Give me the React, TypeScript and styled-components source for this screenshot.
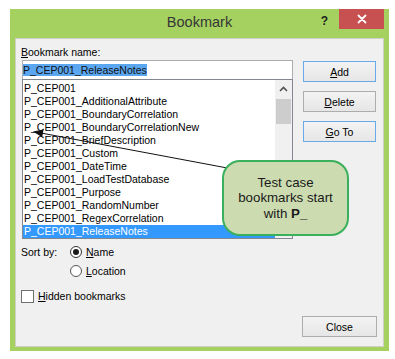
import React from "react";
import styled, { createGlobalStyle } from "styled-components";

const GlobalStyle = createGlobalStyle`
  html, body { margin: 0; padding: 0; background: #ffffff; }
  body { font-family: "Liberation Sans", Arial, sans-serif; color: #000; }
  * { box-sizing: border-box; }
`;

const Page = styled.div`
  padding: 9px 0 0 10px;
`;

const Frame = styled.div`
  position: relative;
  width: 379px;
  height: 342px;
  background: #a4d160;
  padding: 0 5px 4px 5px;
  display: flex;
  flex-direction: column;
`;

const TitleBar = styled.div`
  height: 29px;
  display: grid;
  grid-template-columns: 1fr auto 1fr;
  align-items: start;
`;

const Title = styled.div`
  grid-column: 2;
  font-size: 14.5px;
  line-height: 27px;
  color: #363636;
`;

const Controls = styled.div`
  grid-column: 3;
  justify-self: end;
  display: flex;
  align-items: flex-start;
`;

const Help = styled.div`
  font-size: 12px;
  font-weight: bold;
  line-height: 14px;
  margin-top: 5px;
  margin-right: 11px;
  color: #222;
`;

const CloseX = styled.div`
  width: 45px;
  height: 20px;
  background: #c75050;
  display: flex;
  align-items: center;
  justify-content: center;
`;

const Panel = styled.div`
  flex: 1;
  background: #f0f0f0;
  border: 1px solid #cfcfc4;
  padding: 6px 7px 0 6px;
  display: flex;
  flex-direction: column;
  font-size: 10.5px;
`;

const Body = styled.div`
  display: grid;
  grid-template-columns: 271px 73px;
  column-gap: 10px;
`;

const LeftCol = styled.div`
  display: flex;
  flex-direction: column;
`;

const FieldLabel = styled.div`
  height: 14px;
  line-height: 14px;
  margin-left: -1px;
  margin-bottom: 1px;
`;

const U = styled.span`
  text-decoration: underline;
`;

const NameInput = styled.div`
  height: 19px;
  border: 1px solid #abadb3;
  border-bottom: none;
  background: #fff;
  display: flex;
  align-items: center;
`;

const Selection = styled.span`
  background: #5ba6f0;
  color: #111;
  line-height: 12px;
`;

const ListBox = styled.div`
  height: 160px;
  border: 1px solid #828790;
  background: #fff;
  display: flex;
`;

const Items = styled.div`
  flex: 1;
  padding-top: 2px;
  overflow: hidden;
`;

const Item = styled.div<{ $selected?: boolean }>`
  height: 13px;
  line-height: 13px;
  padding-left: 1px;
  white-space: nowrap;
  background: ${(p) => (p.$selected ? "#3399ff" : "transparent")};
  color: ${(p) => (p.$selected ? "#fff" : "#000")};
`;

const ScrollBar = styled.div`
  width: 17px;
  background: #f0f0f0;
  display: flex;
  flex-direction: column;
`;

const ScrollArrow = styled.div`
  height: 17px;
  display: flex;
  align-items: center;
  justify-content: center;
`;

const ScrollThumb = styled.div`
  height: 25px;
  margin: 2px 1px 0 1px;
  background: #cdcdcd;
`;

const SortSection = styled.div`
  margin-top: 3px;
  display: grid;
  grid-template-columns: 48px auto;
  grid-auto-rows: 19px;
  align-items: center;
`;

const SortLabel = styled.div`
  grid-column: 1;
  grid-row: 1;
  margin-left: -1px;
`;

const RadioOption = styled.div`
  grid-column: 2;
  display: flex;
  align-items: center;
  gap: 4px;
`;

const RadioCircle = styled.div<{ $checked?: boolean }>`
  width: 12px;
  height: 12px;
  border-radius: 50%;
  border: 1px solid ${(p) => (p.$checked ? "#333" : "#555")};
  background: #fff;
  display: flex;
  align-items: center;
  justify-content: center;
  &::after {
    content: "";
    width: 6px;
    height: 6px;
    border-radius: 50%;
    background: ${(p) => (p.$checked ? "#1a1a1a" : "transparent")};
  }
`;

const CheckRow = styled.div`
  margin-top: 7px;
  height: 18px;
  display: flex;
  align-items: center;
  gap: 4px;
  margin-left: -1px;
`;

const CheckBox = styled.div`
  width: 13px;
  height: 13px;
  border: 1px solid #707070;
  background: #fff;
`;

const RightCol = styled.div`
  padding-top: 16px;
  display: flex;
  flex-direction: column;
  gap: 9px;
`;

const DialogButton = styled.div<{ $primary?: boolean }>`
  height: 21px;
  width: 73px;
  border: 1px solid ${(p) => (p.$primary ? "#6aa9e9" : "#adadad")};
  background: linear-gradient(#f3f3f3, #e6e6e6);
  display: flex;
  align-items: center;
  justify-content: center;
  font-size: 10.5px;
  color: #000;
`;

const Footer = styled.div`
  margin-top: 11px;
  display: flex;
  justify-content: flex-end;
  margin-right: -1px;
`;

const CloseButton = styled(DialogButton)`
  width: 75px;
`;

const ArrowLayer = styled.svg`
  position: absolute;
  left: 0;
  top: 0;
  pointer-events: none;
  z-index: 1;
`;

const Callout = styled.div`
  position: absolute;
  left: 212px;
  top: 151px;
  width: 127px;
  height: 76px;
  border: 2px solid #3aaf5c;
  border-radius: 18px;
  background: #cddcb0;
  display: flex;
  align-items: center;
  justify-content: center;
  text-align: center;
  font-family: "Liberation Sans", Arial, sans-serif;
  font-size: 13.3px;
  line-height: 15.5px;
  color: #1a1a1a;
  z-index: 2;
`;

const items = [
  "P_CEP001",
  "P_CEP001_AdditionalAttribute",
  "P_CEP001_BoundaryCorrelation",
  "P_CEP001_BoundaryCorrelationNew",
  "P_CEP001_BriefDescription",
  "P_CEP001_Custom",
  "P_CEP001_DateTime",
  "P_CEP001_LoadTestDatabase",
  "P_CEP001_Purpose",
  "P_CEP001_RandomNumber",
  "P_CEP001_RegexCorrelation",
  "P_CEP001_ReleaseNotes",
];

export default function App() {
  return (
    <>
      <GlobalStyle />
      <Page>
        <Frame>
          <TitleBar>
            <Title>Bookmark</Title>
            <Controls>
              <Help>?</Help>
              <CloseX>
                <svg width="10" height="10" viewBox="0 0 10 10">
                  <path d="M1.5 1.5 L8.5 8.5 M8.5 1.5 L1.5 8.5" stroke="#fff" strokeWidth="1.8" strokeLinecap="round" />
                </svg>
              </CloseX>
            </Controls>
          </TitleBar>
          <Panel>
            <Body>
              <LeftCol>
                <FieldLabel>
                  <U>B</U>ookmark name:
                </FieldLabel>
                <NameInput>
                  <Selection>P_CEP001_ReleaseNotes</Selection>
                </NameInput>
                <ListBox>
                  <Items>
                    {items.map((it, i) => (
                      <Item key={it} $selected={i === items.length - 1}>
                        {it}
                      </Item>
                    ))}
                  </Items>
                  <ScrollBar>
                    <ScrollArrow>
                      <svg width="9" height="6" viewBox="0 0 9 6">
                        <path d="M1 5 L4.5 1.5 L8 5" stroke="#505050" strokeWidth="1.6" fill="none" />
                      </svg>
                    </ScrollArrow>
                    <ScrollThumb />
                  </ScrollBar>
                </ListBox>
                <SortSection>
                  <SortLabel>Sort by:</SortLabel>
                  <RadioOption>
                    <RadioCircle $checked />
                    <span>
                      <U>N</U>ame
                    </span>
                  </RadioOption>
                  <RadioOption>
                    <RadioCircle />
                    <span>
                      <U>L</U>ocation
                    </span>
                  </RadioOption>
                </SortSection>
                <CheckRow>
                  <CheckBox />
                  <span>
                    <U>H</U>idden bookmarks
                  </span>
                </CheckRow>
              </LeftCol>
              <RightCol>
                <DialogButton $primary>
                  <span>
                    <U>A</U>dd
                  </span>
                </DialogButton>
                <DialogButton>
                  <span>
                    <U>D</U>elete
                  </span>
                </DialogButton>
                <DialogButton $primary>
                  <span>
                    <U>G</U>o To
                  </span>
                </DialogButton>
              </RightCol>
            </Body>
            <Footer>
              <CloseButton>Close</CloseButton>
            </Footer>
          </Panel>
          <ArrowLayer width="379" height="342" viewBox="0 0 379 342">
            <line x1="32" y1="124.2" x2="220" y2="159.5" stroke="#111" strokeWidth="1" />
            <polygon points="23,122.5 33.6,120.4 32.1,128.2" fill="#111" />
          </ArrowLayer>
          <Callout>
            <div>
              Test case
              <br />
              bookmarks start
              <br />
              with <b>P_</b>
            </div>
          </Callout>
        </Frame>
      </Page>
    </>
  );
}
